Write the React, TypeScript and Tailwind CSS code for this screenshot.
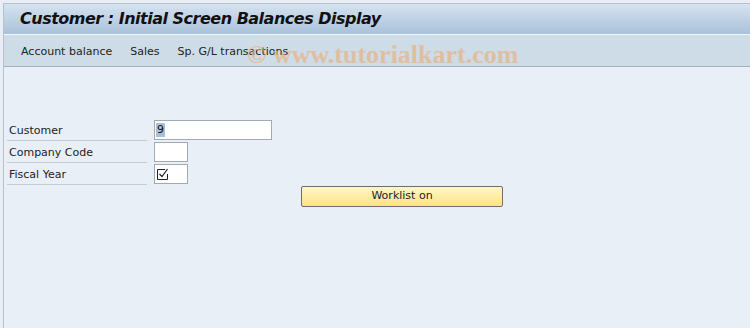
import React from "react";

const sans = { fontFamily: '"DejaVu Sans", "Liberation Sans", sans-serif' };

function Row({ label, children }: { label: string; children: React.ReactNode }) {
  return (
    <div className="flex h-[22px] items-center">
      <div className="flex h-full w-[140px] items-end border-b border-[#c5cbd3] pb-[3px] pl-[2px] text-[11px] leading-[13px] text-[#222]">
        {label}
      </div>
      <div className="ml-[7px] flex h-full items-center">{children}</div>
    </div>
  );
}

export default function App() {
  return (
    <div className="h-[328px] w-[750px] overflow-hidden bg-[#e8eef6] pl-[3px] pt-[3px]" style={sans}>
      <div className="flex h-[325px] flex-col border-l border-t border-[#b9c0cc] bg-[#e8eff7]">
        <div className="flex h-[30px] items-center bg-gradient-to-b from-[#d6e3f0] to-[#a9c1db] pl-[16px]">
          <span className="text-[16px] font-bold italic tracking-[-0.5px] text-[#111]">
            Customer : Initial Screen Balances Display
          </span>
        </div>
        <div className="h-px bg-[#f4f7fa]" />
        <div className="relative flex h-[32px] items-center gap-[18px] border-b border-[#a7b1bd] bg-[#cedce8] pl-[17px] pt-[3px] text-[11px] text-[#222]">
          <span>Account balance</span>
          <span>Sales</span>
          <span>Sp. G/L transactions</span>
          <span
            className="absolute left-[243px] top-[0px] text-[26px] font-bold text-[#e8b383] opacity-70"
            style={{ fontFamily: '"Liberation Serif", serif' }}
          >
            © www.tutorialkart.com
          </span>
        </div>
        <div className="pl-[3px] pt-[52px]">
          <Row label="Customer">
            <div className="flex h-[20px] w-[118px] items-center border border-[#a3a9b0] bg-white pl-px">
              <span className="bg-[#a7c0dc] px-px text-[11px] leading-[14px] text-[#111]">9</span>
            </div>
          </Row>
          <Row label="Company Code">
            <div className="h-[20px] w-[34px] border border-[#a3a9b0] bg-white" />
          </Row>
          <Row label="Fiscal Year">
            <div className="flex h-[20px] w-[34px] items-center border border-[#a3a9b0] bg-white pl-[2px]">
              <svg width="12" height="12" viewBox="0 0 12 12">
                <path d="M0.5 1.5 H8 M0.5 1.5 V11.5 H10.5 V6" fill="none" stroke="#222" />
                <path d="M2.5 6 L5 8.5 L10.5 1" fill="none" stroke="#222" strokeWidth="1.2" />
              </svg>
            </div>
          </Row>
          <div className="mt-[1px] flex pl-[294px]">
            <button className="h-[21px] w-[202px] rounded-[2px] border border-[#6f6f6f] bg-gradient-to-b from-[#fff6c6] to-[#ffe286] text-[11px] text-[#222]">
              Worklist on
            </button>
          </div>
        </div>
      </div>
    </div>
  );
}
